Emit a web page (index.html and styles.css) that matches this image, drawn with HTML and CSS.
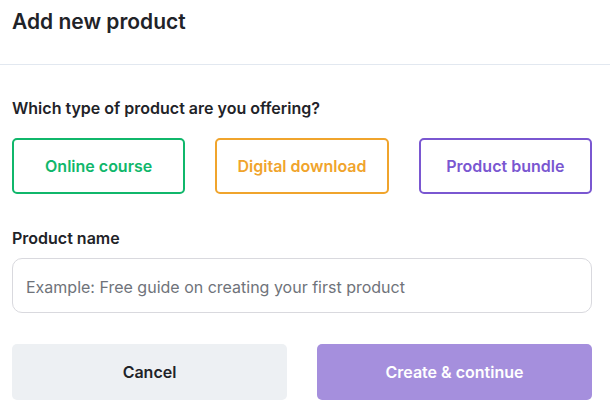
FILE: index.html
```html
<!DOCTYPE html>
<html>
<head>
<meta charset="utf-8">
<link rel="stylesheet" href="styles.css">
</head>
<body>
<div class="modal">
  <header class="modal-header">
    <h1 class="title">Add new product</h1>
  </header>
  <div class="modal-body">
    <p class="question">Which type of product are you offering?</p>
    <div class="types">
      <button class="type type-green">Online course</button>
      <button class="type type-orange">Digital download</button>
      <button class="type type-purple">Product bundle</button>
    </div>
    <label class="label" for="pname">Product name</label>
    <input id="pname" class="input" type="text" placeholder="Example: Free guide on creating your first product">
    <div class="actions">
      <button class="btn btn-cancel">Cancel</button>
      <button class="btn btn-primary">Create &amp; continue</button>
    </div>
  </div>
</div>
</body>
</html>
```
FILE: styles.css
```css
* { box-sizing: border-box; }
html, body { margin: 0; padding: 0; background: #fff; }
body { font-family: Inter, "Noto Sans", sans-serif; color: #1f2328; }
.modal { width: 610px; }
.modal-header {
  padding: 8px 12px 0;
  height: 65px;
  border-bottom: 1px solid #e2e8f0;
}
.title {
  margin: 0;
  font-size: 21px;
  font-weight: 600;
  line-height: 27px;
  color: #1f2328;
}
.modal-body { padding: 33px 18px 0 12px; }
.question {
  margin: 0;
  font-size: 16px;
  font-weight: 600;
  line-height: 21px;
}
.types {
  display: grid;
  grid-template-columns: repeat(3, 1fr);
  gap: 30px;
  margin-top: 19px;
}
.type {
  height: 56px;
  background: #fff;
  border: 2px solid;
  border-radius: 5px;
  font-family: inherit;
  font-size: 16px;
  font-weight: 600;
  cursor: pointer;
}
.type-green { border-color: #10b76b; color: #10b76b; }
.type-orange { border-color: #f0a42c; color: #f0a42c; }
.type-purple { border-color: #7a57d1; color: #7a57d1; }
.label {
  display: block;
  margin-top: 34px;
  font-size: 16px;
  font-weight: 600;
  line-height: 21px;
}
.input {
  display: block;
  width: 100%;
  height: 55px;
  margin-top: 9px;
  padding: 2px 13px 0;
  border: 1px solid #d9d9de;
  border-radius: 10px;
  font-family: inherit;
  font-size: 16px;
  color: #1f2328;
  outline: none;
}
.input::placeholder { color: #6f737a; }
.actions {
  display: grid;
  grid-template-columns: 1fr 1fr;
  gap: 30px;
  margin-top: 31px;
}
.btn {
  height: 56px;
  border: 0;
  border-radius: 5px;
  font-family: inherit;
  font-size: 16px;
  font-weight: 600;
  cursor: pointer;
}
.btn-cancel { background: #edf0f3; color: #1f2328; }
.btn-primary { background: #a58fdd; color: #fff; }
```
